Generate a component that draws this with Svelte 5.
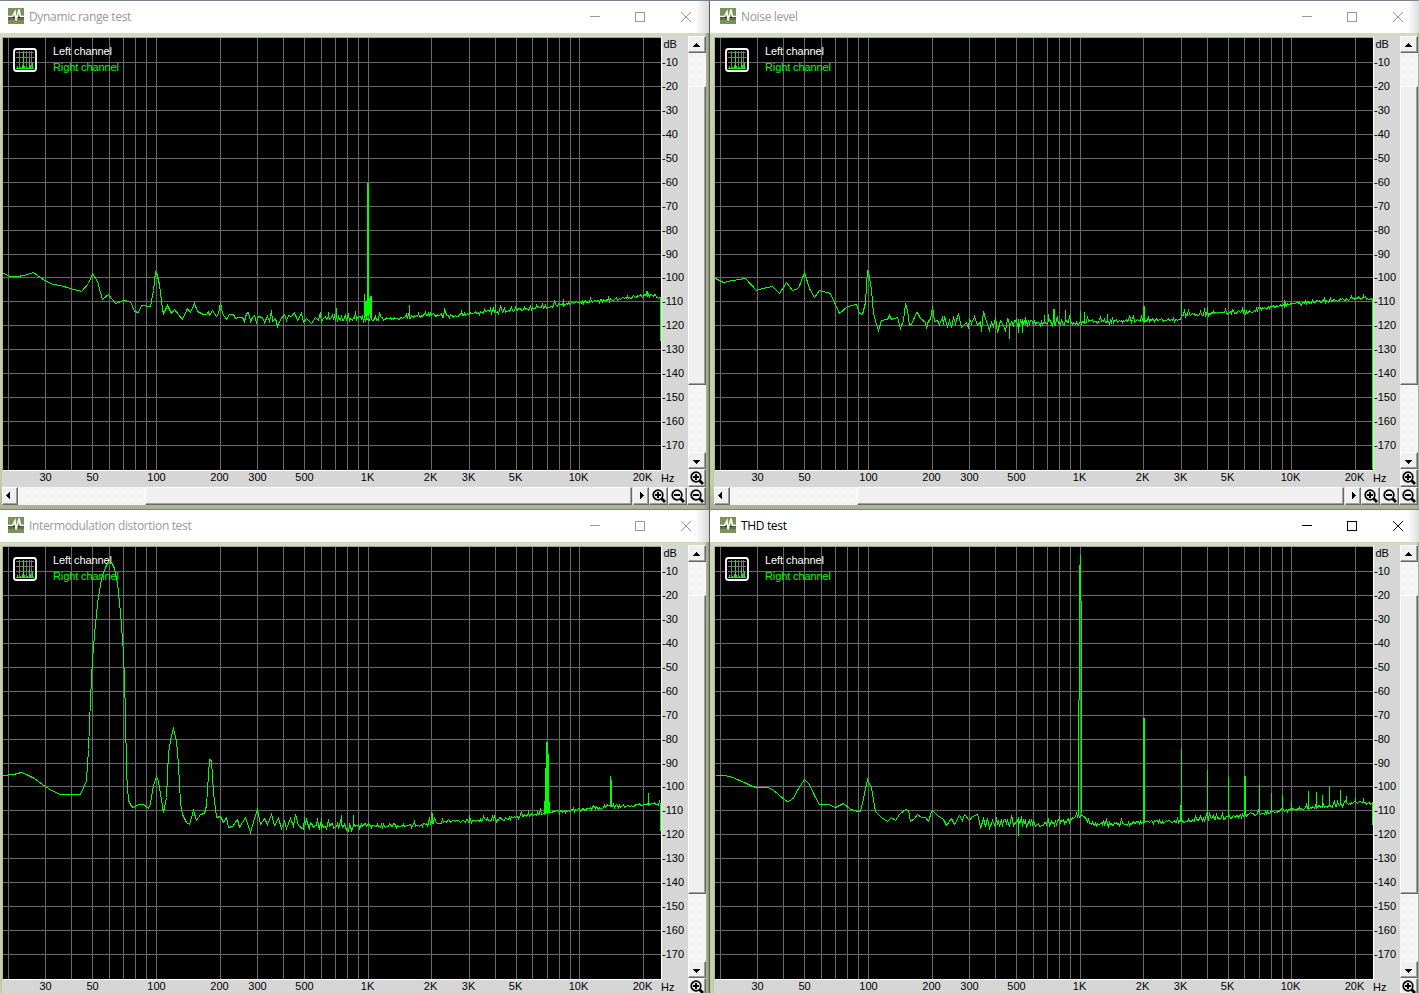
<script lang="ts">
  type Point = [number, number]

  interface Spectrum {
    title: string
    active: boolean
    low: Point[]
    floor: Point[]
    peaks: Point[]
    end: number
    seed: number
    extra: string
  }

  const spectra: Spectrum[] = [
    {
      title: 'Dynamic range test',
      active: false,
      low: [
        [3, 273], [10, 276], [16, 276], [24, 275], [33, 272], [44, 280], [53, 284], [60, 285], [70, 288],
        [81, 291], [88, 283], [92, 273], [97, 281], [102, 299], [108, 294], [115, 303], [123, 300],
        [130, 301], [134, 311], [138, 312], [141, 305], [150, 306], [153, 290], [155, 271], [156, 272],
        [159, 284], [162, 309], [163, 313], [167, 305], [171, 313], [174, 309], [182, 319], [187, 308],
        [190, 312], [194, 303], [197, 311], [203, 314], [206, 314], [208, 311], [209, 315], [212, 310],
        [216, 316], [218, 313], [220, 302], [222, 313], [226, 319], [229, 314], [233, 314], [235, 318],
        [238, 317], [242, 317], [244, 321], [246, 313], [248, 312], [250, 321], [252, 317], [254, 315],
        [256, 322], [258, 316], [262, 317], [264, 322], [267, 316], [269, 321], [271, 310], [272, 321],
        [275, 318], [277, 326], [280, 319], [284, 314], [286, 320], [288, 315], [291, 316], [294, 312],
        [297, 320], [301, 313], [303, 322], [306, 318], [311, 323], [315, 317], [318, 320]
      ],
      floor: [[318, 319], [345, 317], [362, 318], [400, 318], [430, 314], [455, 316], [469, 313], [500, 311], [540, 307], [580, 302], [620, 298], [645, 295], [655, 295], [660, 298]],
      peaks: [[328, 312], [336, 308], [364, 294], [366, 301], [370, 297], [371, 296], [409, 305], [469, 301], [495, 304], [563, 299], [647, 291]],
      end: 341,
      seed: 11,
      extra: 'M367.5 183V316M368.5 183V316M364.5 294V316M365.5 301V317M366.5 302V317M369.5 298V314M370.5 296V313M371.5 297V312'
    },
    {
      title: 'Noise level',
      active: false,
      low: [
        [3, 278], [11, 282], [20, 280], [33, 278], [44, 290], [50, 288], [60, 286], [67, 293], [74, 282],
        [80, 290], [86, 288], [92, 272], [97, 288], [102, 297], [107, 290], [118, 293], [123, 304],
        [127, 313], [135, 306], [144, 304], [147, 313], [150, 314], [153, 302], [155, 270], [156, 271],
        [159, 290], [161, 313], [164, 324], [166, 330], [169, 320], [175, 319], [177, 315], [179, 319],
        [185, 317], [188, 328], [191, 320], [193, 303], [195, 310], [197, 325], [199, 324], [204, 312],
        [205, 312], [208, 318], [213, 322], [214, 328], [216, 320], [218, 319], [220, 306], [222, 321],
        [225, 320], [227, 324], [230, 317], [231, 324], [232, 316], [235, 326], [237, 320], [239, 327],
        [241, 317], [243, 323], [246, 313], [249, 327], [254, 322], [256, 328], [257, 318], [259, 323],
        [262, 316], [265, 325], [268, 321], [269, 331], [271, 311], [274, 321], [277, 330], [279, 322],
        [281, 326], [283, 317], [285, 332], [288, 320], [291, 325], [293, 331], [295, 318]
      ],
      floor: [[295, 323], [328, 322], [370, 322], [400, 321], [431, 320], [468, 319], [470, 315], [500, 313], [540, 311], [548, 308], [580, 304], [610, 301], [640, 298], [653, 297], [660, 300]],
      peaks: [[297, 339], [306, 333], [310, 333], [313, 317], [332, 315], [336, 314], [341, 309], [342, 309], [353, 310], [368, 311], [372, 312], [395, 314], [431, 306], [432, 306], [469, 301], [495, 307], [572, 300], [651, 294]],
      end: 469,
      seed: 5,
      extra: ''
    },
    {
      title: 'Intermodulation distortion test',
      active: false,
      low: [
        [3, 266], [13, 265], [21, 263], [26, 265], [34, 269], [42, 275], [51, 281], [60, 285], [80, 285],
        [86, 271], [88, 240], [90, 190], [92, 150], [94, 125], [97, 94], [100, 76], [101, 69], [105, 58],
        [108, 52], [111, 53], [114, 59], [117, 74], [120, 103], [123, 143], [125, 203], [126, 263],
        [128, 291], [131, 297], [133, 298], [138, 295], [143, 295], [148, 299], [150, 294], [153, 276],
        [156, 267], [158, 272], [163, 303], [166, 288], [168, 243], [171, 226], [173, 219], [176, 231],
        [178, 256], [180, 293], [182, 305], [186, 313], [189, 315], [193, 301], [196, 311], [200, 305],
        [204, 304], [206, 296], [209, 250], [211, 251], [213, 283], [216, 308], [220, 307], [223, 313],
        [226, 308], [228, 318], [232, 317], [237, 310], [239, 318], [245, 308], [250, 323], [254, 309],
        [257, 300], [260, 315], [264, 309], [267, 315], [271, 305], [274, 316], [278, 309], [281, 319],
        [284, 312], [286, 319], [290, 309], [293, 317], [295, 305], [298, 316], [303, 320]
      ],
      floor: [[303, 316], [340, 316], [348, 319], [351, 320], [354, 316], [370, 316], [420, 316], [431, 313], [460, 312], [500, 310], [530, 305], [543, 304], [555, 303], [580, 300], [610, 297], [640, 295], [660, 295]],
      peaks: [[321, 309], [341, 306], [353, 306], [431, 303], [432, 304], [469, 306], [528, 301], [544, 292], [549, 293], [648, 284]],
      end: 322,
      seed: 23,
      extra: 'M545.5 304V259M546.5 304V233M547.5 304V233M548.5 303V245M610.5 298V267M611.5 298V271'
    },
    {
      title: 'THD test',
      active: true,
      low: [
        [3, 266], [13, 266], [20, 268], [32, 273], [40, 277], [44, 278], [55, 278], [60, 280], [66, 285],
        [73, 291], [75, 292], [80, 290], [86, 279], [92, 270], [97, 275], [102, 286], [107, 295],
        [116, 295], [123, 298], [131, 294], [138, 300], [146, 302], [148, 302], [151, 289], [155, 270],
        [159, 279], [163, 302], [169, 308], [175, 312], [179, 308], [183, 311], [187, 305], [193, 300],
        [196, 301], [198, 312], [202, 309], [205, 305], [209, 308], [213, 308], [216, 312], [219, 302],
        [220, 301], [225, 306], [231, 310], [234, 316], [239, 309], [242, 315], [247, 306], [250, 311],
        [252, 305], [257, 311], [260, 307], [265, 305], [267, 312], [268, 319], [271, 309], [273, 317],
        [275, 309], [277, 319], [280, 311], [283, 318]
      ],
      floor: [[283, 313], [328, 314], [340, 315], [365, 308], [367, 306], [370, 304], [374, 308], [376, 314], [400, 315], [431, 313], [455, 312], [470, 312], [495, 309], [516, 308], [547, 304], [570, 301], [600, 298], [630, 295], [650, 293], [660, 295]],
      peaks: [[306, 327], [469, 240], [468, 296], [495, 261], [516, 268], [547, 276], [559, 284], [570, 286], [579, 292], [596, 282], [604, 283], [610, 286], [617, 278], [628, 281], [634, 287], [643, 289], [651, 289]],
      end: 316,
      seed: 42,
      extra: 'M366.5 307V191M367.5 191V56M368.5 92V46M369.5 92V304M431.5 313V209M432.5 313V209M532.5 306V267M533.5 306V267'
    }
  ]

  const freqLines = [
    8, 45, 71, 92, 109, 123, 135, 146, 156, 220, 257, 283, 304, 321, 335, 347, 358, 368,
    431, 469, 495, 516, 532, 547, 559, 570, 579, 643
  ]

  const freqLabels = [
    { x: 45, label: '30' },
    { x: 92, label: '50' },
    { x: 156, label: '100' },
    { x: 219, label: '200' },
    { x: 257, label: '300' },
    { x: 304, label: '500' },
    { x: 367, label: '1K' },
    { x: 430, label: '2K' },
    { x: 468, label: '3K' },
    { x: 515, label: '5K' },
    { x: 578, label: '10K' },
    { x: 642, label: '20K' }
  ]

  const dbLines = Array.from({ length: 17 }, (_, i) => ({
    y: (i < 9 ? 62 : 61) + i * 24,
    label: `-${(i + 1) * 10}`
  }))

  function floorAt(floor: Point[], x: number): number {
    for (let i = 1; i < floor.length; i++) {
      const [x0, y0] = floor[i - 1]
      const [x1, y1] = floor[i]
      if (x <= x1) return y0 + ((x - x0) / (x1 - x0)) * (y1 - y0)
    }
    return floor[floor.length - 1][1]
  }

  function getPath(s: Spectrum): string {
    let path = 'M' + s.low.map(([x, y]) => `${x + 0.5} ${y + 0.5}`).join('L')
    let seed = s.seed
    const random = () => {
      seed = (seed * 16807) % 2147483647
      return seed / 2147483647
    }
    for (let x = s.floor[0][0] + 1; x <= 660; x++) {
      const amp = 3.4 + (5 * Math.max(0, 400 - x)) / 100
      let y = Math.round(floorAt(s.floor, x) + (random() - 0.5) * amp)
      if (random() < 0.08) y -= x < 560 ? 4 : 2
      path += `L${x + 0.5} ${y + 0.5}`
      const peak = s.peaks.find((p) => p[0] === x)
      if (peak) path += `V${peak[1]}V${y + 0.5}`
    }
    return path + `V${s.end}` + s.extra
  }
</script>

{#snippet arrow(d: string)}
  <svg width="14" height="14" viewBox="0 0 14 14" shape-rendering="crispEdges"><path {d} /></svg>
{/snippet}

{#snippet zoom(plus: boolean)}
  <svg width="16" height="16" viewBox="0 0 16 16">
    <circle cx="7" cy="7" r="4.8" fill="#f0f0f0" stroke="#000" stroke-width="1.7" />
    <path d="M10.5 10.5L14 14" stroke="#000" stroke-width="2.8" />
    <path d={plus ? 'M4 7H10M7 4V10' : 'M4 7H10'} stroke="#000" stroke-width="2" />
  </svg>
{/snippet}

<main class="desktop">
  {#each spectra as s}
    <section class="window" class:active={s.active}>
      <header class="titlebar">
        <svg class="app-icon" width="16" height="16" viewBox="0 0 16 16">
          <rect width="16" height="16" fill="#7b925d" />
          <rect y="9" width="16" height="1" fill="#15240b" />
          <rect y="10" width="16" height="2" fill="#5c7443" />
          <path
            d="M0 8.5H4.5L7 3.5L8 12.5L11 1.5L12.5 8.5H16"
            fill="none"
            stroke="#fff"
            stroke-width="1.5"
          />
        </svg>
        <span class="title">{s.title}</span>
        <svg class="caption" width="137" height="32" viewBox="0 0 137 32" shape-rendering="crispEdges">
          <path d="M18 15.5H28M63.5 11.5H72.5V20.5H63.5Z" />
          <path d="M109 11L119 21M119 11L109 21" shape-rendering="auto" />
        </svg>
      </header>

      <div class="body">
        <div class="upper">
          <svg class="graph" width="686" height="451" viewBox="2 36 686 451">
            <g shape-rendering="crispEdges">
              <rect x="2" y="36" width="660" height="435" fill="#fff" />
              <rect x="2" y="36" width="659" height="2" fill="#a3a3a3" />
              <rect x="2" y="36" width="659" height="1" fill="#d6d6d6" />
              <rect x="2" y="37" width="1" height="434" fill="#b4b4b4" />
              <rect x="3" y="38" width="658" height="432" />
              {#each freqLines as x}
                <rect {x} y="38" width="1" height="432" fill="#696969" />
              {/each}
              {#each dbLines as line}
                <rect x="3" y={line.y} width="658" height="1" fill="#696969" />
              {/each}
            </g>

            <text x="53" y="55" class="legend left" textLength="59">Left channel</text>
            <text x="53" y="71" class="legend right" textLength="66">Right channel</text>
            <path d={getPath(s)} class="trace" />

            <rect x="14" y="49" width="22" height="22" rx="2.5" fill="#000" stroke="#fff" stroke-width="1.8" />
            <g shape-rendering="crispEdges">
              <path
                d="M16 52.5H34M16 57.5H34M16 62.5H34M19.5 51V69M23.5 51V69M26.5 51V69M29.5 51V69M31.5 51V69"
                stroke="#777"
              />
              <path
                d="M16 68.5H34M17.5 66V69M20.5 67V69M23.5 51V69M22.5 65V69M24.5 66V69M27.5 67V69M29.5 60V69M30.5 65V69M32.5 63V69"
                stroke="#0f0"
              />
            </g>

            <text x="663.5" y="48" class="axis-label">dB</text>
            {#each dbLines as line}
              <text x="662" y={line.y + 4} class="axis-label">{line.label}</text>
            {/each}
            {#each freqLabels as f}
              <text x={f.x + 0.5} y="481" text-anchor="middle" class="axis-label">{f.label}</text>
            {/each}
            <text x="661" y="482" class="axis-label">Hz</text>
          </svg>

          <div class="vscroll">
            <button class="btn" aria-label="Up">{@render arrow('M6 5h1v1h1v1h1v1h1v1h-7v-1h1v-1h1v-1h1z')}</button>
            <div class="track v-before"></div>
            <div class="thumb v-thumb"></div>
            <div class="track grow"></div>
            <button class="btn" aria-label="Down">{@render arrow('M3 6h7v1h-1v1h-1v1h-1v1h-1v-1h-1v-1h-1v-1h-1z')}</button>
            <button class="btn zoom-btn" aria-label="Zoom in level">{@render zoom(true)}</button>
          </div>
        </div>

        <div class="lower">
          <button class="btn arrow-btn" aria-label="Left">{@render arrow('M3 6h1v-1h1v-1h1v-1h1v7h-1v-1h-1v-1h-1v-1h-1z')}</button>
          <div class="track h-before"></div>
          <div class="thumb grow"></div>
          <button class="btn arrow-btn next" aria-label="Right">{@render arrow('M6 3h1v1h1v1h1v1h1v1h-1v1h-1v1h-1v1h-1z')}</button>
          <button class="btn zoom-btn" aria-label="Zoom in">{@render zoom(true)}</button>
          <button class="btn zoom-btn" aria-label="Zoom out">{@render zoom(false)}</button>
          <button class="btn zoom-btn" aria-label="Zoom out level">{@render zoom(false)}</button>
        </div>
      </div>
    </section>
  {/each}
</main>

<style>
  :global(body) {
    overflow: hidden;
    background: #c6d1ab;
  }

  .desktop {
    display: grid;
    grid-template-columns: 712px 712px;
    grid-auto-rows: 509px;
    width: 1424px;
    height: 993px;
    margin-left: -2px;
    overflow: hidden;
  }

  .window {
    box-sizing: border-box;
    border-top: 1px solid #7b8291;
    border-right: 1px solid #555b55;
    background: linear-gradient(90deg, transparent 706px, #8d9581 711px), linear-gradient(#d7dfc3, #c3cfa7 120px, #c3cfa7 480px, #a9b48f);
  }

  .titlebar {
    display: flex;
    align-items: center;
    height: 32px;
    padding-left: 10px;
    background: linear-gradient(90deg, #fff 697px, #d8d8d8 711px);
  }

  .app-icon {
    margin-bottom: 2px;
  }

  .title {
    flex: 1;
    margin-left: 5px;
    padding-bottom: 1px;
    font-family: 'Open Sans', 'Noto Sans', sans-serif;
    font-size: 12px;
    letter-spacing: -0.34px;
    color: #999;
  }

  .caption {
    fill: none;
    stroke: #999;
  }

  .active .title {
    color: #000;
  }

  .active .caption {
    stroke: #000;
  }

  .body {
    width: 704px;
    margin: 3px 0 0 4px;
    background: #d6d6d6;
  }

  .upper,
  .lower {
    display: flex;
  }

  .graph {
    display: block;
    background: #d6d6d6;
  }

  .trace {
    fill: none;
    stroke: #0f0;
    stroke-width: 1;
    shape-rendering: crispEdges;
  }

  .legend,
  .axis-label {
    font-family: 'Liberation Sans', Arial, sans-serif;
    font-size: 11px;
  }

  .left {
    fill: #fff;
  }

  .right {
    fill: #0f0;
  }

  .vscroll {
    display: flex;
    flex-direction: column;
    width: 18px;
    height: 451px;
  }

  .lower {
    height: 18px;
  }

  .btn,
  .thumb {
    box-sizing: border-box;
    flex: none;
    border: 1px solid;
    border-color: #fff #696969 #696969 #fff;
    background: #f0f0f0;
    box-shadow: inset -1px -1px #a0a0a0;
  }

  .btn {
    display: flex;
    align-items: center;
    justify-content: center;
    width: 18px;
    height: 17px;
    padding: 0;
  }

  .btn svg {
    flex: none;
  }

  .zoom-btn {
    width: 19px;
    height: 18px;
  }

  .vscroll .zoom-btn {
    width: 18px;
  }

  .arrow-btn {
    width: 16px;
    height: 18px;
  }

  .next {
    margin-left: 1px;
  }

  .track {
    background: repeating-conic-gradient(#fff 0 25%, #ededed 0 50%) 0 0 / 2px 2px;
  }

  .v-before {
    height: 33px;
  }

  .v-thumb {
    height: 299px;
  }

  .h-before {
    width: 127px;
  }

  .thumb.grow,
  .grow {
    flex: 1;
  }
</style>
